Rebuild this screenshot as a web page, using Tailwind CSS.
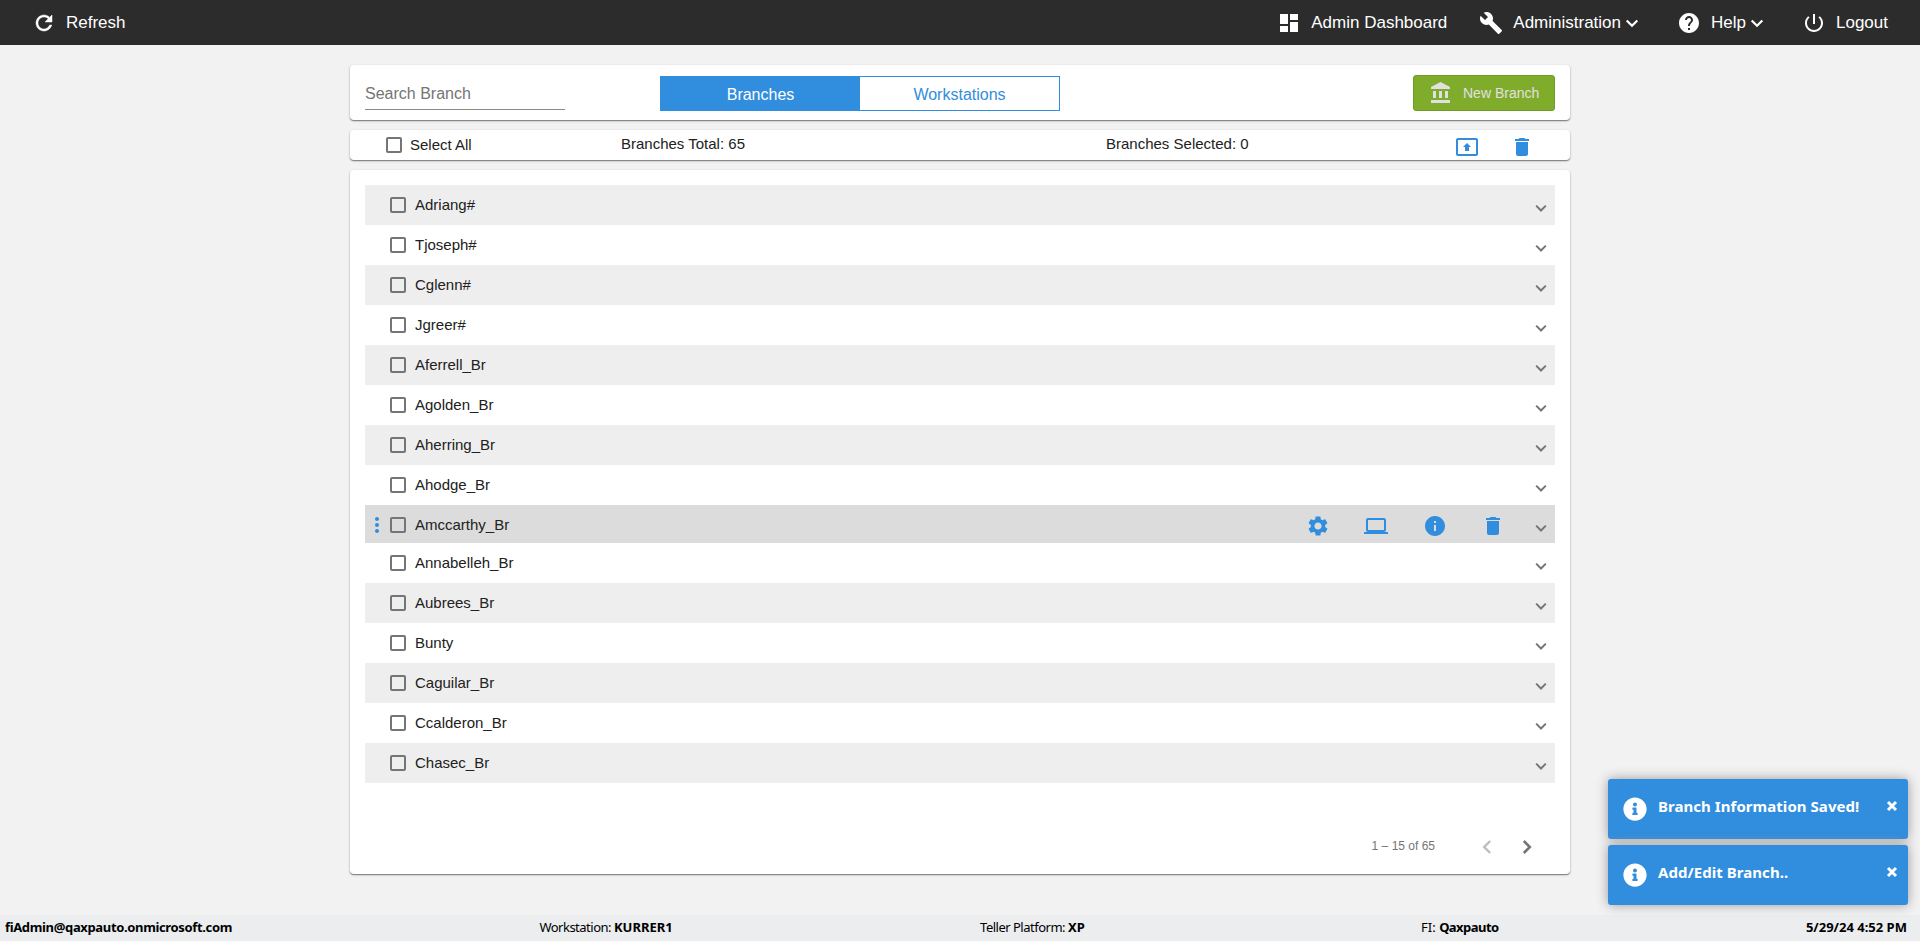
<!DOCTYPE html>
<html lang="en">
<head>
    <meta charset="UTF-8">
    <meta name="viewport" content="width=device-width, initial-scale=1.0">
    <title>Branches</title>
    <script src="https://cdn.jsdelivr.net/npm/@tailwindcss/browser@4"></script>
</head>
<body class="bg-[#f2f2f2] font-['Liberation_Sans',Arial,sans-serif] text-[#212121] overflow-hidden">
    <svg class="hidden">
        <symbol id="refresh" viewBox="0 0 24 24"><path stroke="currentColor" stroke-width=".5" d="M17.65 6.35C16.2 4.9 14.21 4 12 4c-4.42 0-7.99 3.58-7.99 8s3.57 8 7.99 8c3.73 0 6.84-2.55 7.73-6h-2.08c-.82 2.33-3.04 4-5.65 4-3.31 0-6-2.69-6-6s2.69-6 6-6c1.66 0 3.14.69 4.22 1.78L13 11h7V4l-2.35 2.35z"/></symbol>
        <symbol id="dashboard" viewBox="0 0 24 24"><path d="M3 13h8V3H3v10zm0 8h8v-6H3v6zm10 0h8V11h-8v10zm0-18v6h8V3h-8z"/></symbol>
        <symbol id="build" viewBox="0 0 24 24"><path d="M22.7 19l-9.1-9.1c.9-2.3.4-5-1.5-6.9-2-2-5-2.4-7.4-1.3L9 6 6 9 1.6 4.7C.4 7.1.9 10.1 2.9 12.1c1.9 1.9 4.6 2.4 6.9 1.5l9.1 9.1c.4.4 1 .4 1.4 0l2.3-2.3c.5-.4.5-1.1.1-1.4z"/></symbol>
        <symbol id="help" viewBox="0 0 24 24"><path d="M12 2C6.48 2 2 6.48 2 12s4.48 10 10 10 10-4.48 10-10S17.52 2 12 2zm1 17h-2v-2h2v2zm2.07-7.75l-.9.92C13.45 12.9 13 13.5 13 15h-2v-.5c0-1.1.45-2.1 1.17-2.83l1.24-1.26c.37-.36.59-.86.59-1.41 0-1.1-.9-2-2-2s-2 .9-2 2H8c0-2.21 1.79-4 4-4s4 1.79 4 4c0 .88-.36 1.68-.93 2.25z"/></symbol>
        <symbol id="power" viewBox="0 0 24 24"><path d="M13 3h-2v10h2V3zm4.83 2.17l-1.42 1.42C17.99 7.86 19 9.81 19 12c0 3.87-3.13 7-7 7s-7-3.13-7-7c0-2.19 1.01-4.14 2.58-5.42L6.17 5.17C4.23 6.82 3 9.26 3 12c0 4.97 4.03 9 9 9s9-4.03 9-9c0-2.74-1.23-5.18-3.17-6.83z"/></symbol>
        <symbol id="expand" viewBox="0 0 24 24"><path d="M6.200 9.200L12 15l5.800-5.800" fill="none" stroke="currentColor" stroke-width="2.400"/></symbol>
        <symbol id="bank" viewBox="0 0 24 24"><path d="M4 10v7h3v-7H4zm6 0v7h3v-7h-3zM2 22h19v-3H2v3zm14-12v7h3v-7h-3zm-4.5-9L2 6v2h19V6l-9.500-5z"/></symbol>
        <symbol id="present" viewBox="0 0 24 24"><path d="M21 3H3c-1.110 0-2 .89-2 2v14c0 1.100.89 2 2 2h18c1.110 0 2-.9 2-2V5c0-1.110-.89-2-2-2zm0 16.020H3V4.980h18v14.040zM10 12H8l4-4 4 4h-2v4h-4v-4z"/></symbol>
        <symbol id="trash" viewBox="0 0 24 24"><path d="M6 19c0 1.100.9 2 2 2h8c1.100 0 2-.9 2-2V7H6v12zM19 4h-3.500l-1-1h-5l-1 1H5v2h14V4z"/></symbol>
        <symbol id="settings" viewBox="0 0 24 24"><path fill-rule="evenodd" d="M19.14 12.94c.04-.3.060-.61.060-.94 0-.32-.02-.64-.07-.94l2.030-1.580c.18-.14.23-.41.12-.61l-1.920-3.320c-.12-.22-.37-.29-.59-.22l-2.390.96c-.5-.38-1.030-.7-1.620-.94l-.36-2.540c-.04-.24-.24-.41-.48-.41h-3.840c-.24 0-.43.17-.47.41l-.36 2.540c-.59.24-1.130.57-1.620.94l-2.390-.96c-.22-.08-.47 0-.59.22L2.740 8.870c-.12.21-.08.47.12.61l2.030 1.580c-.05.3-.09.63-.09.94s.02.64.07.94l-2.030 1.580c-.18.14-.23.41-.12.61l1.920 3.320c.12.22.37.29.59.22l2.390-.96c.5.38 1.030.7 1.620.94l.36 2.540c.05.24.24.41.48.41h3.840c.24 0 .44-.17.47-.41l.36-2.540c.59-.24 1.130-.56 1.620-.94l2.390.96c.22.08.47 0 .59-.22l1.920-3.320c.12-.22.07-.47-.12-.61l-2.010-1.580zM12 15.600c-1.980 0-3.600-1.620-3.600-3.600s1.620-3.600 3.600-3.600 3.600 1.620 3.600 3.600-1.620 3.600-3.600 3.600z"/></symbol>
        <symbol id="laptop" viewBox="0 0 24 24"><path d="M20 18c1.100 0 1.990-.9 1.990-2L22 6c0-1.100-.9-2-2-2H4c-1.100 0-2 .9-2 2v10c0 1.100.9 2 2 2H0v2h24v-2h-4zM4 6h16v10H4V6z"/></symbol>
        <symbol id="info" viewBox="0 0 24 24"><path d="M12 2C6.480 2 2 6.480 2 12s4.480 10 10 10 10-4.480 10-10S17.520 2 12 2zm1 15h-2v-6h2v6zm0-8h-2V7h2v2z"/></symbol>
        <symbol id="more" viewBox="0 0 24 24"><path d="M12 8c1.100 0 2-.9 2-2s-.9-2-2-2-2 .9-2 2 .9 2 2 2zm0 2c-1.100 0-2 .9-2 2s.9 2 2 2 2-.9 2-2-.9-2-2-2zm0 6c-1.100 0-2 .9-2 2s.9 2 2 2 2-.9 2-2-.9-2-2-2z"/></symbol>
        <symbol id="prev" viewBox="0 0 24 24"><path d="M15.200 6L9.200 12l6 6" fill="none" stroke="currentColor" stroke-width="2.4"/></symbol>
        <symbol id="next" viewBox="0 0 24 24"><path d="M8.800 6l6 6-6 6" fill="none" stroke="currentColor" stroke-width="2.6"/></symbol>
        <symbol id="info-circle" viewBox="0 0 512 512"><path d="M256 8C119.043 8 8 119.083 8 256c0 136.997 111.043 248 248 248s248-111.003 248-248C504 119.083 392.957 8 256 8zm0 110c23.196 0 42 18.804 42 42s-18.804 42-42 42-42-18.804-42-42 18.804-42 42-42zm56 254c0 6.627-5.373 12-12 12h-88c-6.627 0-12-5.373-12-12v-24c0-6.627 5.373-12 12-12h12v-64h-12c-6.627 0-12-5.373-12-12v-24c0-6.627 5.373-12 12-12h64c6.627 0 12 5.373 12 12v100h12c6.627 0 12 5.373 12 12v24z"/></symbol>
        <symbol id="close" viewBox="0 0 12 12"><path d="M2 2l8 8M10 2l-8 8" fill="none" stroke="currentColor" stroke-width="3"/></symbol>
    </svg>

    <div class="h-[941px] flex flex-col">
        <header class="h-[45px] bg-[#2c2c2c] text-white text-[17px] flex items-center justify-between px-8 shrink-0">
            <a class="flex items-center">
                <svg class="size-6 fill-current mr-[10px]"><use href="#refresh"/></svg>
                Refresh
            </a>
            <nav class="flex items-center">
                <a class="flex items-center mr-8"><svg class="size-6 fill-current mr-[10px]"><use href="#dashboard"/></svg>Admin Dashboard</a>
                <a class="flex items-center mr-[34px]"><svg class="size-6 fill-current mr-[10px]"><use href="#build"/></svg>Administration<svg class="size-[22px]"><use href="#expand"/></svg></a>
                <a class="flex items-center mr-[34px]"><svg class="size-6 fill-current mr-[10px]"><use href="#help"/></svg>Help<svg class="size-[22px]"><use href="#expand"/></svg></a>
                <a class="flex items-center"><svg class="size-6 fill-current mr-[10px]"><use href="#power"/></svg>Logout</a>
            </nav>
        </header>

        <main class="w-[1220px] mx-auto mt-5 flex flex-col gap-[10px]">
            <section class="h-[55px] bg-white rounded shadow-[0_1px_1px_#0006,0_1px_3px_#0003] flex items-start px-[15px]">
                <div class="w-[200px] h-[45px] border-b border-[#8a8a8a] text-[#757575] text-base pt-[17px] leading-6">Search Branch</div>
                <div class="ml-[95px] mt-[11px] flex h-[35px] w-[400px] border border-[#318ddd] text-base leading-[35px] text-center">
                    <div class="w-[199px] bg-[#318ddd] text-white">Branches</div>
                    <div class="flex-1 text-[#318ddd]">Workstations</div>
                </div>
                <button class="ml-auto mt-[10px] w-[142px] h-9 bg-[#80ac2b] border border-[#729a27] rounded-[3px] text-[#e0e0e0] text-sm flex items-center pl-[15px]">
                    <svg class="size-6 fill-current mr-[10px]"><use href="#bank"/></svg>New Branch
                </button>
            </section>

            <section class="h-[30px] bg-white rounded shadow-[0_1px_1px_#0006,0_1px_3px_#0003] text-[15px] flex items-center">
                <div class="w-[271px] pl-9 flex items-center gap-2"><span class="size-4 border-2 border-[#757575] rounded-[2px]"></span>Select All</div>
                <div class="w-[485px] -mt-0.5">Branches Total: 65</div>
                <div class="w-[349px] -mt-0.5">Branches Selected: 0</div>
                <svg class="size-6 fill-[#318ddd] mt-1 mr-[31px]"><use href="#present"/></svg>
                <svg class="size-6 fill-[#318ddd] mt-1"><use href="#trash"/></svg>
            </section>

            <section class="h-[704px] bg-white rounded shadow-[0_1px_1px_#0006,0_1px_3px_#0003] p-[15px] flex flex-col">
                <div id="branchList"></div>
                <div class="flex items-center justify-end mt-[52px] pr-4 text-xs text-[#757575]">
                    <span class="mr-10 -mt-0.5">1 – 15 of 65</span>
                    <svg class="size-6 text-[#bdbdbd] mr-4"><use href="#prev"/></svg>
                    <svg class="size-6 text-[#757575]"><use href="#next"/></svg>
                </div>
            </section>
        </main>

        <footer class="mt-auto h-[26px] bg-[#ebedef] text-black text-[13px] font-['Noto_Sans',sans-serif] flex items-center justify-between pl-[5px] pr-[13px]">
            <b class="tracking-[-0.35px]">fiAdmin@qaxpauto.onmicrosoft.com</b>
            <span class="tracking-[-0.5px]">Workstation: <b class="tracking-normal">KURRER1</b></span>
            <span class="tracking-[-0.5px]">Teller Platform: <b class="tracking-normal">XP</b></span>
            <span class="ml-[29px]">FI: <b class="tracking-[-0.55px]">Qaxpauto</b></span>
            <b>5/29/24 4:52 PM</b>
        </footer>
    </div>

    <div class="absolute right-3 top-[779px] w-[300px] flex flex-col gap-1.5 font-['Noto_Sans',sans-serif] font-bold text-white text-[15px] tracking-[0.05px]">
        <div class="h-[60px] bg-[#318ddd] rounded-[3px] shadow-[0_0_12px_#999] flex pl-[15px] pr-[10px]">
            <svg class="size-6 fill-current mt-[18px] mr-[11px]"><use href="#info-circle"/></svg>
            <span class="mt-4">Branch Information Saved!</span>
            <svg class="size-3 ml-auto mt-[21px]"><use href="#close"/></svg>
        </div>
        <div class="h-[60px] bg-[#318ddd] rounded-[3px] shadow-[0_0_12px_#999] flex pl-[15px] pr-[10px]">
            <svg class="size-6 fill-current mt-[18px] mr-[11px]"><use href="#info-circle"/></svg>
            <span class="mt-4">Add/Edit Branch..</span>
            <svg class="size-3 ml-auto mt-[21px]"><use href="#close"/></svg>
        </div>
    </div>

    <script>
        const branches = ["Adriang#", "Tjoseph#", "Cglenn#", "Jgreer#", "Aferrell_Br", "Agolden_Br", "Aherring_Br", "Ahodge_Br", "Amccarthy_Br", "Annabelleh_Br", "Aubrees_Br", "Bunty", "Caguilar_Br", "Ccalderon_Br", "Chasec_Br"];
        const active = "Amccarthy_Br";

        const rowClass = (name, i) => {
            if(name === active) return "h-[38px] bg-[#dcdcdc]";
            return i % 2 === 0 ? "h-10 bg-[#eee]" : "h-10 bg-white";
        }

        const actions = ["settings", "laptop", "info", "trash"].map(icon =>
            `<svg class="size-6 fill-[#318ddd]"><use href="#${icon}"/></svg>`
        ).join("");

        document.getElementById('branchList').innerHTML = branches.map((name, i) => `
            <div class="flex items-start ${rowClass(name, i)}">
                <div class="w-[25px] pt-2">${name === active ? '<svg class="size-6 fill-[#318ddd]"><use href="#more"/></svg>' : ''}</div>
                <span class="size-4 mt-3 border-2 border-[#757575] rounded-[2px]"></span>
                <span class="ml-[9px] mt-2 leading-6 text-[15px]">${name}</span>
                <div class="ml-auto flex">
                    ${name === active ? `<div class="flex gap-[34.4px] mt-[9px] mr-[26px]">${actions}</div>` : ''}
                    <svg class="size-5 text-[#757575] mt-[13px] mr-1"><use href="#expand"/></svg>
                </div>
            </div>
        `).join("");
    </script>
</body>
</html>
